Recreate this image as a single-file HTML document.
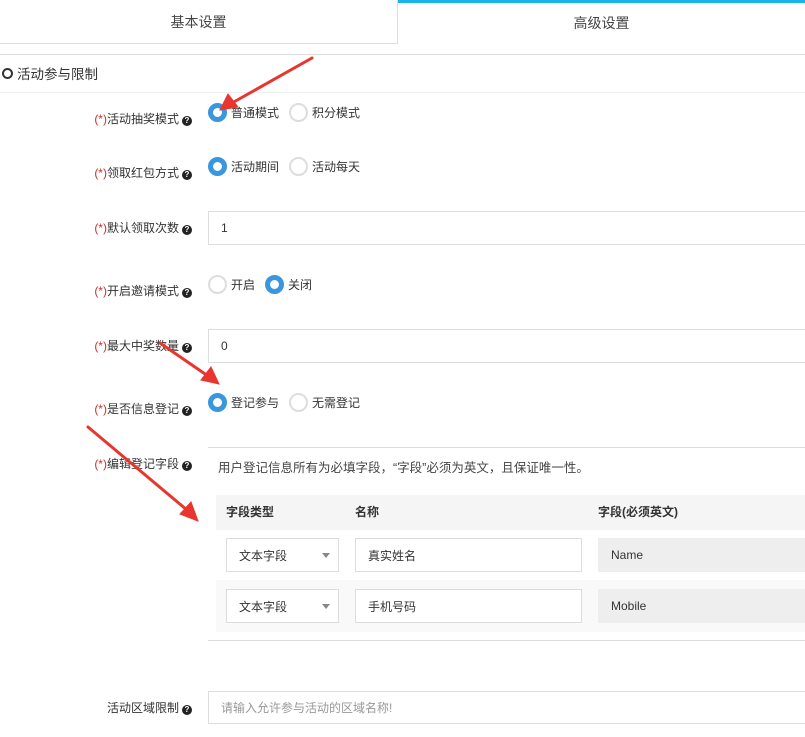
<!DOCTYPE html>
<html><head><meta charset="utf-8"><style>
*{margin:0;padding:0;box-sizing:border-box}
body{width:805px;height:737px;overflow:hidden;background:#fff;font-family:"Liberation Sans","Noto Sans CJK SC",sans-serif;font-size:12px;color:#333;position:relative}
.a{position:absolute}
.lbl{position:absolute;right:613px;white-space:nowrap;font-size:12px;color:#333}
.lbl i{font-style:normal;color:#c9302c}
.q{display:inline-block;width:10px;height:10px;border-radius:50%;background:#222;color:#fff;font-size:8px;line-height:10px;text-align:center;font-weight:bold;margin-left:3px;vertical-align:0}
.r{position:absolute;display:flex;align-items:center;font-size:12px}
.rd{width:19px;height:19px;border-radius:50%;border:2px solid #ddd;display:inline-block;margin-right:4px}
.rd.on{border:5px solid #3a96dd;background:#fff}
.inp{position:absolute;border:1px solid #ddd;background:#fff;font-size:12px;padding-left:12px;display:flex;align-items:center}
</style></head><body>
<div class="a" style="left:0;top:0;width:398px;height:44px;border-right:1px solid #ddd;border-bottom:1px solid #ddd;text-align:center;line-height:44px;font-size:14px;color:#444">基本设置</div>
<div class="a" style="left:398px;top:0;width:407px;height:3px;background:#17b3ea"></div>
<div class="a" style="left:398px;top:0;width:407px;height:44px;text-align:center;line-height:46px;font-size:14px;color:#444">高级设置</div>
<div class="a" style="left:0;top:54px;width:805px;height:1px;background:#ddd"></div>
<div class="a" style="left:2px;top:63px;font-size:13.5px;display:flex;align-items:center"><span style="display:inline-block;width:11px;height:11px;border:2px solid #333;border-radius:50%;margin-right:4px"></span>活动参与限制</div>
<div class="a" style="left:0;top:92px;width:805px;height:1px;background:#f0f0f0"></div>

<div class="lbl" style="top:110px"><i>(*)</i>活动抽奖模式<span class="q">?</span></div>
<div class="r" style="left:208px;top:103px"><span class="rd on"></span>普通模式<span class="rd" style="margin-left:10px"></span>积分模式</div>

<div class="lbl" style="top:164px"><i>(*)</i>领取红包方式<span class="q">?</span></div>
<div class="r" style="left:208px;top:157px"><span class="rd on"></span>活动期间<span class="rd" style="margin-left:10px"></span>活动每天</div>

<div class="lbl" style="top:219px"><i>(*)</i>默认领取次数<span class="q">?</span></div>
<div class="inp" style="left:208px;top:211px;width:620px;height:34px">1</div>

<div class="lbl" style="top:282px"><i>(*)</i>开启邀请模式<span class="q">?</span></div>
<div class="r" style="left:208px;top:275px"><span class="rd"></span>开启<span class="rd on" style="margin-left:10px"></span>关闭</div>

<div class="lbl" style="top:337px"><i>(*)</i>最大中奖数量<span class="q">?</span></div>
<div class="inp" style="left:208px;top:329px;width:620px;height:34px">0</div>

<div class="lbl" style="top:400px"><i>(*)</i>是否信息登记<span class="q">?</span></div>
<div class="r" style="left:208px;top:393px"><span class="rd on"></span>登记参与<span class="rd" style="margin-left:10px"></span>无需登记</div>

<div class="lbl" style="top:455px"><i>(*)</i>编辑登记字段<span class="q">?</span></div>
<div class="a" style="left:208px;top:447px;width:620px;height:194px;border-top:1px solid #ddd;border-bottom:1px solid #ddd"></div>
<div class="a" style="left:218px;top:457px;font-size:12.5px;color:#444">用户登记信息所有为必填字段，“字段”必须为英文，且保证唯一性。</div>
<div class="a" style="left:216px;top:495px;width:600px;height:35px;background:#f5f5f5;font-weight:bold;font-size:12px;line-height:35px">
<span class="a" style="left:10px">字段类型</span><span class="a" style="left:139px">名称</span><span class="a" style="left:382px">字段(必须英文)</span></div>
<div class="a" style="left:216px;top:580px;width:600px;height:52px;background:#f9f9f9"></div>
<div class="inp" style="left:226px;top:538px;width:113px;height:34px">文本字段<span class="a" style="right:8px;top:14px;border:4px solid transparent;border-top:5px solid #888"></span></div>
<div class="inp" style="left:355px;top:538px;width:227px;height:34px">真实姓名</div>
<div class="inp" style="left:598px;top:538px;width:220px;height:34px;background:#eee;border-color:#eee">Name</div>
<div class="inp" style="left:226px;top:589px;width:113px;height:34px">文本字段<span class="a" style="right:8px;top:14px;border:4px solid transparent;border-top:5px solid #888"></span></div>
<div class="inp" style="left:355px;top:589px;width:227px;height:34px">手机号码</div>
<div class="inp" style="left:598px;top:589px;width:220px;height:34px;background:#eee;border-color:#eee">Mobile</div>

<div class="lbl" style="top:699px">活动区域限制<span class="q">?</span></div>
<div class="inp" style="left:208px;top:691px;width:620px;height:33px;color:#999">请输入允许参与活动的区域名称!</div>

<svg class="a" style="left:0;top:0" width="805" height="737">
<g fill="#e8362f" stroke="#e8362f" stroke-linecap="round">
<line x1="312" y1="58" x2="232" y2="103" stroke-width="3"/>
<polygon points="220,110 228,94 238,107" stroke-width="1"/>
<line x1="160" y1="343" x2="208" y2="376" stroke-width="3"/>
<polygon points="219,384 201,380 211,367" stroke-width="1"/>
<line x1="88" y1="427" x2="187" y2="510" stroke-width="3"/>
<polygon points="198,521 180,514 191,502" stroke-width="1"/>
</g></svg>
</body></html>
